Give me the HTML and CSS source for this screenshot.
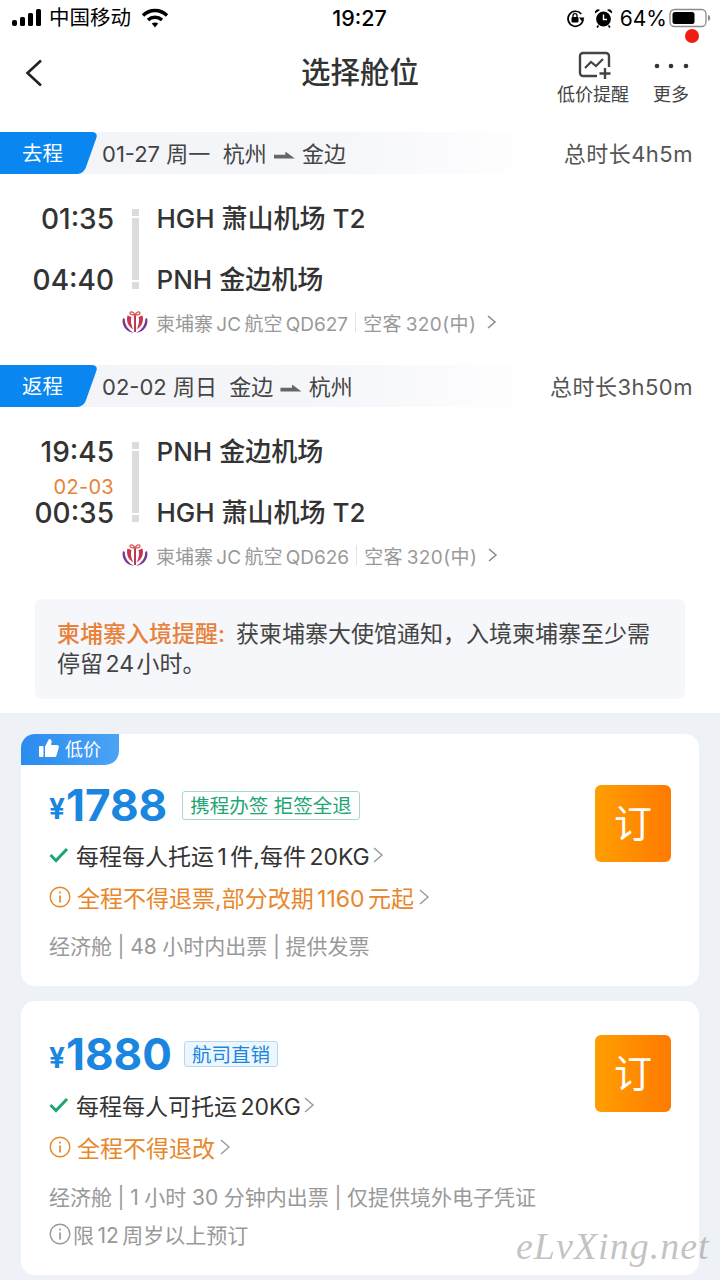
FILE: index.html
```html
<!DOCTYPE html>
<html lang="zh-CN">
<head>
<meta charset="utf-8">
<title>选择舱位</title>
<link rel="stylesheet" href="styles.css">
</head>
<body>
<div class="page">
  <header class="status">
    <div class="status-left">
      <svg class="signal" width="30" height="18" viewBox="0 0 30 18"><rect x="0" y="11" width="5" height="6" rx="2" fill="#000"/><rect x="8" y="8" width="5" height="9" rx="1.5" fill="#000"/><rect x="16" y="4" width="5" height="13" rx="1.5" fill="#000"/><rect x="24" y="0" width="5" height="17" rx="1.5" fill="#000"/></svg>
      <span class="carrier">中国移动</span>
      <svg class="wifi" width="28" height="20" viewBox="0 0 28 20"><path d="M2 7.5C9 .8 19 .8 26 7.5" fill="none" stroke="#000" stroke-width="3.4"/><path d="M7 12c4-3.600 10-3.600 14 0" fill="none" stroke="#000" stroke-width="3.4"/><path d="M10.800 15.600c2-1.400 4.400-1.400 6.400 0L14 19.400z" fill="#000"/></svg>
    </div>
    <div class="clock">19:27</div>
    <div class="status-right">
      <svg width="19" height="20" viewBox="0 0 19 20"><path d="M15.300 6A7.500 7.500 0 1 0 17 10.500" fill="none" stroke="#000" stroke-width="1.700"/><path d="M13 9.500h5.500L15.700 13z" fill="#000"/><rect x="5.500" y="9" width="7" height="5.500" rx="1" fill="#000"/><path d="M7 9V7.600a2 2 0 0 1 4 0V9" fill="none" stroke="#000" stroke-width="1.300"/></svg>
      <svg width="19" height="20" viewBox="0 0 19 20"><circle cx="9.500" cy="11" r="7.400" fill="#000"/><path d="M9.500 6.500V11.500H13" fill="none" stroke="#fff" stroke-width="1.400"/><path d="M1 5.500a3.200 3.200 0 0 1 5-3.500zM18 5.500a3.200 3.200 0 0 0-5-3.500z" fill="#000"/><path d="M4.500 17.500l-1.500 2M14.500 17.500l1.500 2" stroke="#000" stroke-width="1.600"/></svg>
      <span class="pct">64%</span>
      <svg class="battery" width="42" height="20" viewBox="0 0 42 20"><rect x="1" y="1.500" width="36" height="17" rx="4.500" fill="none" stroke="#8c8c8c" stroke-width="1.300"/><rect x="3.500" y="4" width="22" height="12" rx="2.500" fill="#000"/><path d="M39 7v6c1.500-.5 2.200-1.700 2.200-3S40.500 7.500 39 7z" fill="#8c8c8c"/></svg>
    </div>
    <span class="red-dot"></span>
  </header>

  <nav class="nav">
    <svg class="back" width="20" height="30" viewBox="0 0 20 30"><path d="M17 2.500L3.500 15 17 27.500" fill="none" stroke="#222" stroke-width="2.600"/></svg>
    <h1 class="title">选择舱位</h1>
    <div class="nav-actions">
      <div class="action action-alert">
        <svg width="34" height="30" viewBox="0 0 34 30"><path d="M19 25H5a3 3 0 0 1-3-3V5a3 3 0 0 1 3-3h23a3 3 0 0 1 3 3v11" fill="none" stroke="#444" stroke-width="2.400"/><path d="M7 17l6-6 5 4 7-7" fill="none" stroke="#444" stroke-width="2.200"/><path d="M27 17v11M21.500 22.500h11" stroke="#444" stroke-width="2.400"/></svg>
        <span>低价提醒</span>
      </div>
      <div class="action action-more">
        <svg width="36" height="30" viewBox="0 0 36 30"><circle cx="4" cy="15" r="2.300" fill="#333"/><circle cx="18" cy="15" r="2.300" fill="#333"/><circle cx="33" cy="15" r="2.300" fill="#333"/></svg>
        <span>更多</span>
      </div>
    </div>
  </nav>

  <section class="segment">
    <div class="seg-head">
      <div class="seg-info">
        <span class="seg-tag">去程</span>
        <span class="seg-date">01-27 周一&nbsp; 杭州 <i class="arrow"></i> 金边</span>
      </div>
      <span class="seg-total">总时长4h5m</span>
    </div>
    <div class="flight">
      <div class="times">
        <span class="time">01:35</span>
        <span class="time">04:40</span>
      </div>
      <div class="bar"></div>
      <div class="airports">
        <span>HGH 萧山机场 T2</span>
        <span>PNH 金边机场</span>
      </div>
    </div>
    <div class="airline">
      <svg class="logo" width="28" height="24" viewBox="0 0 28 24"><path d="M14 5v17" stroke="#b93a55" stroke-width="2"/><path d="M6.500 5.500C5 11 7 16.500 12.500 19.500 10 15.500 9.500 10 10.500 7z" fill="#c8354d"/><path d="M21.500 5.500C23 11 21 16.500 15.500 19.500 18 15.500 18.500 10 17.500 7z" fill="#c8354d"/><path d="M2 8C0 15 5 22 13 23 7.500 20 3.500 15 3.800 9z" fill="#7b3591"/><path d="M26 8c2 7-3 14-11 15 5.500-3 9.500-8 9.200-14z" fill="#7b3591"/><path d="M14 5C12.500 1.500 9 1 9 3s3 2 5 2 5 0 5-2-3.500-1.500-5 2z" fill="none" stroke="#d8574f" stroke-width="1.300"/></svg>
      <span>柬埔寨 JC 航空 QD627</span><i class="sep"></i><span class="plane">空客 320(中)</span>
      <svg class="chev-small" width="12" height="16" viewBox="0 0 12 16"><path d="M2 2l7 6-7 6" fill="none" stroke="#888" stroke-width="1.500"/></svg>
    </div>
  </section>

  <section class="segment segment-return">
    <div class="seg-head">
      <div class="seg-info">
        <span class="seg-tag">返程</span>
        <span class="seg-date">02-02 周日&nbsp; 金边 <i class="arrow"></i> 杭州</span>
      </div>
      <span class="seg-total">总时长3h50m</span>
    </div>
    <div class="flight">
      <div class="times">
        <span class="time">19:45</span>
        <span class="next-day">02-03</span>
        <span class="time">00:35</span>
      </div>
      <div class="bar"></div>
      <div class="airports">
        <span>PNH 金边机场</span>
        <span>HGH 萧山机场 T2</span>
      </div>
    </div>
    <div class="airline">
      <svg class="logo" width="28" height="24" viewBox="0 0 28 24"><path d="M14 5v17" stroke="#b93a55" stroke-width="2"/><path d="M6.500 5.500C5 11 7 16.500 12.500 19.500 10 15.500 9.500 10 10.500 7z" fill="#c8354d"/><path d="M21.500 5.500C23 11 21 16.500 15.500 19.500 18 15.500 18.500 10 17.500 7z" fill="#c8354d"/><path d="M2 8C0 15 5 22 13 23 7.500 20 3.500 15 3.800 9z" fill="#7b3591"/><path d="M26 8c2 7-3 14-11 15 5.500-3 9.500-8 9.200-14z" fill="#7b3591"/><path d="M14 5C12.500 1.500 9 1 9 3s3 2 5 2 5 0 5-2-3.500-1.500-5 2z" fill="none" stroke="#d8574f" stroke-width="1.300"/></svg>
      <span>柬埔寨 JC 航空 QD626</span><i class="sep"></i><span class="plane">空客 320(中)</span>
      <svg class="chev-small" width="12" height="16" viewBox="0 0 12 16"><path d="M2 2l7 6-7 6" fill="none" stroke="#888" stroke-width="1.500"/></svg>
    </div>
  </section>

  <div class="notice"><b>柬埔寨入境提醒:</b><span>获柬埔寨大使馆通知，入境柬埔寨至少需停留 24 小时。</span></div>

  <main class="offers">
    <article class="card card-first">
      <div class="low-tag">
        <svg width="20" height="20" viewBox="0 0 20 20"><rect x="0" y="8" width="4.500" height="11" rx="1" fill="#fff"/><path d="M6 8.500l4-7.500c2 0 3 1.500 2.500 3.500L12 7h6c1.500 0 2.200 1.200 1.800 2.500l-2.300 8c-.3 1-1 1.500-2 1.500H6z" fill="#fff"/></svg>
        <span>低价</span>
      </div>
      <div class="card-body">
        <div class="card-main">
          <div class="price-row">
            <span class="yen">¥</span><span class="price">1788</span>
            <span class="badge badge-green">携程办签 拒签全退</span>
          </div>
          <div class="line line-baggage">
            <svg class="check" width="20" height="16" viewBox="0 0 20 16"><path d="M1.500 8l5.500 5.500L18 2" fill="none" stroke="#1ea672" stroke-width="3"/></svg>
            <span>每程每人托运 1 件,每件 20KG</span>
            <svg class="chev" width="13" height="20" viewBox="0 0 13 20"><path d="M2 3l8 7-8 7" fill="none" stroke="#999" stroke-width="1.400"/></svg>
          </div>
          <div class="line line-warn">
            <svg class="info" width="22" height="22" viewBox="0 0 22 22"><circle cx="11" cy="11" r="9.800" fill="none" stroke="#e8872a" stroke-width="1.400"/><rect x="10.200" y="9.500" width="1.700" height="7" fill="#e8872a"/><rect x="10.200" y="5.500" width="1.700" height="2" fill="#e8872a"/></svg>
            <span>全程不得退票,部分改期 1160 元起</span>
            <svg class="chev" width="13" height="20" viewBox="0 0 13 20"><path d="M2 3l8 7-8 7" fill="none" stroke="#999" stroke-width="1.400"/></svg>
          </div>
          <div class="line line-meta line-meta-first">经济舱 | 48 小时内出票 | 提供发票</div>
        </div>
        <button class="book">订</button>
      </div>
    </article>

    <article class="card card-second">
      <div class="card-body">
        <div class="card-main">
          <div class="price-row">
            <span class="yen">¥</span><span class="price">1880</span>
            <span class="badge badge-blue">航司直销</span>
          </div>
          <div class="line line-baggage">
            <svg class="check" width="20" height="16" viewBox="0 0 20 16"><path d="M1.500 8l5.500 5.500L18 2" fill="none" stroke="#1ea672" stroke-width="3"/></svg>
            <span>每程每人可托运 20KG</span>
            <svg class="chev" width="13" height="20" viewBox="0 0 13 20"><path d="M2 3l8 7-8 7" fill="none" stroke="#999" stroke-width="1.400"/></svg>
          </div>
          <div class="line line-warn">
            <svg class="info" width="22" height="22" viewBox="0 0 22 22"><circle cx="11" cy="11" r="9.800" fill="none" stroke="#e8872a" stroke-width="1.400"/><rect x="10.200" y="9.500" width="1.700" height="7" fill="#e8872a"/><rect x="10.200" y="5.500" width="1.700" height="2" fill="#e8872a"/></svg>
            <span>全程不得退改</span>
            <svg class="chev" width="13" height="20" viewBox="0 0 13 20"><path d="M2 3l8 7-8 7" fill="none" stroke="#999" stroke-width="1.400"/></svg>
          </div>
          <div class="line line-meta line-meta-first">经济舱 | 1 小时 30 分钟内出票 | 仅提供境外电子凭证</div>
          <div class="line line-meta line-age">
            <svg class="info" width="22" height="22" viewBox="0 0 22 22"><circle cx="11" cy="11" r="9.800" fill="none" stroke="#999" stroke-width="1.400"/><rect x="10.200" y="9.500" width="1.700" height="7" fill="#999"/><rect x="10.200" y="5.500" width="1.700" height="2" fill="#999"/></svg>
            <span>限 12 周岁以上预订</span>
          </div>
        </div>
        <button class="book">订</button>
      </div>
    </article>
  </main>
  <div class="watermark">eLvXing.net</div>
</div>
</body>
</html>
```

FILE: styles.css
```css
* { box-sizing: border-box; }
html, body { margin: 0; padding: 0; }
body {
  width: 720px;
  height: 1280px;
  overflow: hidden;
  background: #fff;
  font-family: Inter, "Noto Sans CJK SC", sans-serif;
  color: #333;
}
.page { position: relative; width: 720px; height: 1280px; overflow: hidden; }

.status {
  position: relative;
  display: grid;
  grid-template-columns: 1fr auto 1fr;
  align-items: center;
  height: 36px;
  padding: 0 9px 0 12px;
  color: #000;
}
.status-left { display: flex; align-items: center; gap: 7px; }
.carrier { font-size: 20.500px; line-height: 30px; }
.wifi { margin-left: 3px; }
.clock { margin-right: 4px; font-size: 21.500px; font-weight: 500; }
.status-right { display: flex; align-items: center; justify-content: flex-end; gap: 9px; }
.pct { font-size: 21px; margin-left: -2px; margin-right: -7px; }
.red-dot {
  position: absolute;
  left: 685px;
  top: 29px;
  width: 14px;
  height: 14px;
  border-radius: 50%;
  background: #f01d12;
}

.nav {
  position: relative;
  display: flex;
  align-items: center;
  justify-content: center;
  height: 76px;
}
.back { position: absolute; left: 24px; top: 22px; }
.title { margin: 0 0 2px; font-size: 29.500px; font-weight: 500; color: #333; line-height: 1; }
.nav-actions {
  position: absolute;
  right: 31px;
  top: 15px;
  display: flex;
  gap: 24px;
}
.action { display: flex; flex-direction: column; align-items: center; font-size: 18px; color: #444; line-height: 26px; }
.action svg { display: block; margin-bottom: 1px; }
.action-alert svg { margin-left: 4px; }

.segment { margin-top: 20px; }
.segment-return { margin-top: 28px; }
.seg-head {
  display: flex;
  align-items: center;
  justify-content: space-between;
  height: 42px;
  padding-right: 27px;
}
.seg-info {
  display: flex;
  align-items: center;
  width: 540px;
  height: 42px;
  background: linear-gradient(90deg, #f2f4f8 0%, #f5f6fa 60%, #fff 100%);
}
.seg-tag {
  position: relative;
  isolation: isolate;
  display: flex;
  align-items: center;
  width: 98px;
  height: 42px;
  padding: 0 0 3px 22px;
  font-size: 20.500px;
  color: #fff;
}
.seg-tag::before {
  content: "";
  position: absolute;
  z-index: -1;
  top: 0;
  right: 7px;
  bottom: 0;
  left: -20px;
  border-radius: 0 6px 6px 0;
  background: #0a86f0;
  transform: skewX(-19.600deg);
}
.seg-date { margin: 0 0 3px 4px; font-size: 22px; color: #444; white-space: pre; }
.arrow {
  display: inline-block;
  width: 21px;
  height: 7px;
  margin: 0 1px;
  vertical-align: 3px;
  background: #666;
  clip-path: polygon(0 45%, 55% 45%, 55% 0, 100% 100%, 0 100%);
}
.seg-total { margin-bottom: 3px; font-size: 22px; letter-spacing: .5px; color: #555; white-space: nowrap; }

.flight {
  display: flex;
  height: 80px;
  margin-top: 35px;
}
.times {
  position: relative;
  display: flex;
  flex-direction: column;
  justify-content: space-between;
  align-items: flex-end;
  width: 114px;
  height: 91px;
  margin-top: -5px;
}
.time { font-size: 28px; font-weight: 500; line-height: 30px; color: #333; }
.next-day {
  position: absolute;
  right: 0;
  top: 40px;
  font-size: 20px;
  line-height: 20px;
  letter-spacing: .3px;
  color: #e8813a;
}
.bar {
  width: 7px;
  height: 80px;
  margin-left: 18px;
  background: linear-gradient(#dcdcdc 0 7px, #fff 7px 9px, #dcdcdc 9px 71px, #fff 71px 73px, #dcdcdc 73px);
}
.airports {
  display: flex;
  flex-direction: column;
  justify-content: space-between;
  height: 91px;
  margin-top: -5px;
  margin-left: 17.500px;
  font-size: 26px;
  font-weight: 500;
  line-height: 30px;
  color: #333;
}
.airline {
  display: flex;
  align-items: center;
  height: 30px;
  margin-top: 18px;
  padding-left: 121px;
  font-size: 19px;
  word-spacing: -2px;
  color: #999;
}
.logo { margin-right: 7px; }
.sep { width: 1px; height: 20px; margin: 0 7px; background: #e2e2e2; }
.plane { letter-spacing: .4px; }
.chev-small { margin-left: 10px; }

.notice {
  width: 650px;
  height: 100px;
  margin: 29px 0 0 35px;
  padding: 20px 22px;
  border-radius: 6px;
  background: #f5f7fa;
  font-size: 23px;
  line-height: 30px;
  word-spacing: -4px;
  color: #444;
}
.notice b { margin-right: 11px; font-weight: 500; color: #e8813a; }

.offers {
  height: 567px;
  margin-top: 14px;
  padding: 21px 21px 0;
  background: #eef2f7;
}
.card {
  position: relative;
  height: 274px;
  margin-top: 15px;
  border-radius: 14px;
  background: #fff;
}
.card-first { height: 252px; margin-top: 0; }
.low-tag {
  position: absolute;
  left: 0;
  top: 0;
  display: flex;
  align-items: center;
  gap: 6px;
  width: 98px;
  height: 31px;
  padding: 0 0 3px 18px;
  border-radius: 14px 0 14px 0;
  background: linear-gradient(90deg, #2a8cf0, #4ba3f5);
  font-size: 18px;
  color: #fff;
}
.card-body {
  display: flex;
  justify-content: space-between;
  padding: 34px 28px 0 28px;
}
.card-first .card-body { padding-top: 51px; }
.card-main { display: flex; flex-direction: column; }
.price-row { display: flex; align-items: center; height: 48px; margin-top: -5px; }
.card-first .price-row { margin-top: -4px; }
.yen { margin: 8px 1px 0 0; font-size: 28px; font-weight: 700; color: #1a86e0; }
.price { font-size: 44px; font-weight: 700; color: #1a86e0; line-height: 48px; }
.badge {
  display: flex;
  align-items: center;
  height: 29px;
  padding: 0 7px 2px;
  border-radius: 3px;
  font-size: 19.500px;
  white-space: nowrap;
}
.badge-green { margin-left: 15px; color: #1ea672; border: 1px solid #a5dcc8; }
.badge-blue { margin-left: 12px; height: 26px; color: #1a86e0; background: #eef6fd; border: 1px solid #b5d8f5; }
.line {
  display: flex;
  align-items: center;
  height: 30px;
  padding-bottom: 2px;
  font-size: 23px;
  white-space: nowrap;
}
.line-baggage { margin-top: 12px; color: #333; gap: 7px; word-spacing: -3px; }
.card-second .line-baggage { margin-top: 13px; }
.line-baggage .chev { margin-left: -5px; }
.line-warn { margin-top: 12px; color: #e8872a; gap: 6px; word-spacing: -3px; }
.line-warn .chev { margin-left: -2px; }
.line-meta { color: #999; font-size: 21px; word-spacing: -.3px; }
.line-meta-first { margin-top: 18px; }
.card-second .line-meta-first { margin-top: 19px; }
.line-age { margin-top: 8px; gap: 2px; word-spacing: -2.500px; }
.book {
  flex: none;
  width: 76px;
  height: 77px;
  padding: 0 0 6px;
  border: 0;
  border-radius: 6px;
  background: linear-gradient(90deg, #ff9f00, #ff7a00);
  color: #fff;
  font-family: inherit;
  font-size: 38px;
}
.watermark {
  position: absolute;
  left: 516px;
  top: 1224px;
  font-family: "Liberation Serif", serif;
  font-style: italic;
  font-size: 38px;
  letter-spacing: 1px;
  color: rgba(120, 120, 120, 0.45);
  white-space: nowrap;
}
```
